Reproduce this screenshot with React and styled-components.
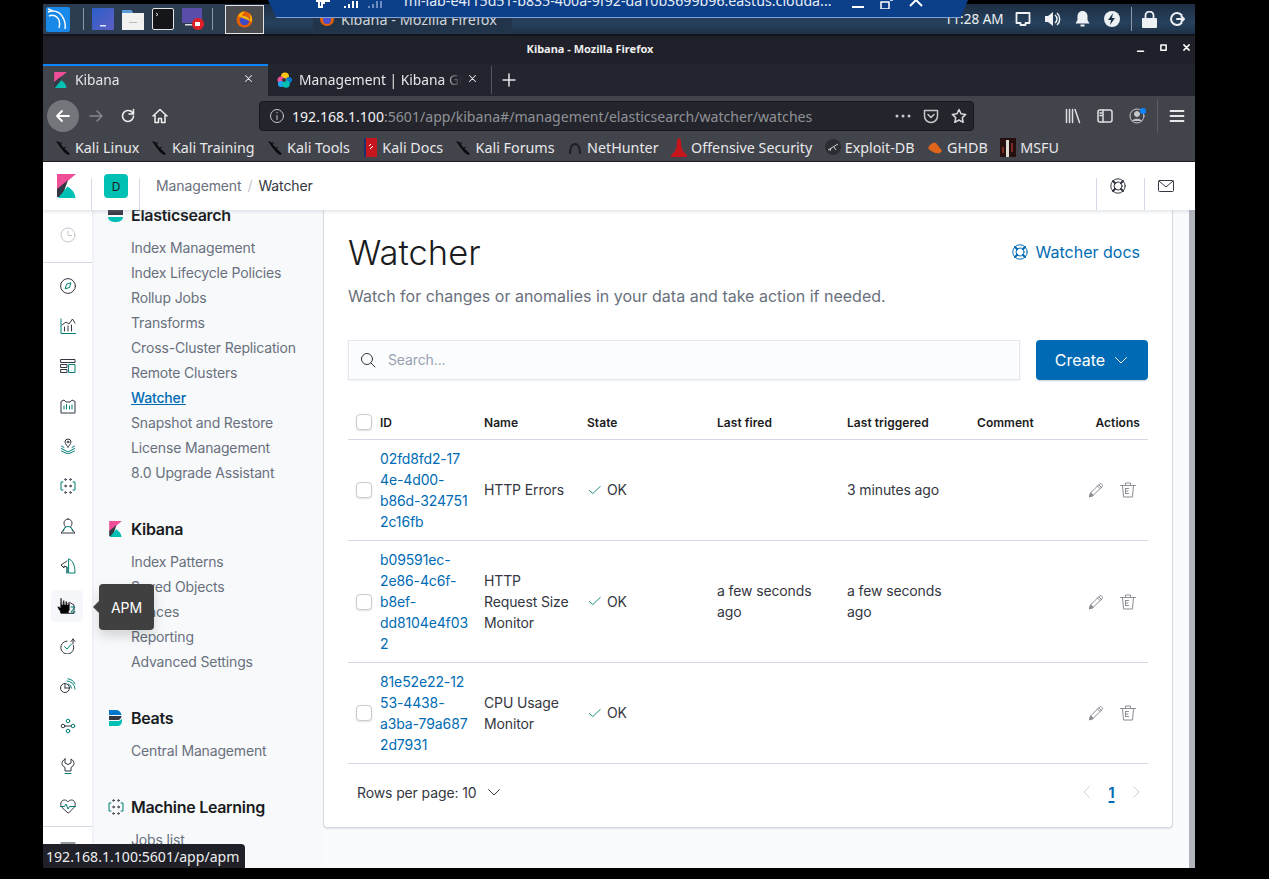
import React from 'react';
import styled, { createGlobalStyle } from 'styled-components';

const Global = createGlobalStyle`
  html, body { margin: 0; padding: 0; background: #000; height: 879px; overflow: hidden; }
  * { box-sizing: border-box; }
  #root { height: 879px; }
`;
const FF = `"Noto Sans", "Open Sans", sans-serif`;
const UI = `Inter, "Liberation Sans", sans-serif`;
const TEAL = '#017d73';
const DARK = '#343741';

const Stage = styled.div`position: relative; width: 1269px; height: 879px; background: #000; padding: 4px 74px 11px 43px; overflow: hidden;`;
const Screen = styled.div`display: flex; flex-direction: column; height: 864px; font-family: ${FF};`;

const Taskbar = styled.div`height: 30px; flex: none; background: linear-gradient(#1c2d42, #27415c 60%, #1e3248); display: flex; align-items: center; color: #e8ebee;`;
const Launcher = styled.div`display: flex; align-items: center; height: 100%; width: 182px; padding-left: 3px; gap: 8px; background: #2c3d52;`;
const Sep = styled.span`width: 1px; height: ${p => p.$h || 22}px; background: ${p => p.$c || '#8b98a8'}; flex: none; margin: ${p => p.$m || '0'};`;
const ActiveApp = styled.div`width: 39px; height: 29px; border: 1px solid #e4e4e4; background: #4a4c50; display: flex; align-items: center; justify-content: center; flex: none;`;
const TaskTitle = styled.div`margin-left: 49px; width: 199px; height: 100%; padding-left: 6px; background: #223449; display: flex; align-items: center; gap: 6px; font-size: 14.4px; color: #cfd6dd; white-space: nowrap; overflow: hidden;`;
const Clock = styled.div`margin-left: auto; font-size: 13.5px; color: #eef1f4; white-space: nowrap; margin-right: 11px; font-family: ${FF};`;
const Tray = styled.div`display: flex; align-items: center; gap: 14px; padding-right: 10px;`;
const TrayNudge = styled.span`display: block; margin-left: -1.5px;`;

const TitleBar = styled.div`height: 30px; flex: none; background: #1f2029; border-top: 2px solid #14151b; display: flex; align-items: center; position: relative; color: #eee; font-size: 11px; font-weight: 700; justify-content: center; padding: 0 58px 4px 0;`;
const WinCtl = styled.div`position: absolute; right: 1px; top: 7px; display: flex; gap: 11px; align-items: center;`;

const TabBar = styled.div`height: 32px; flex: none; background: #23252e; display: flex; align-items: stretch; color: #e6e6e8; font-size: 13.8px;`;
const TabBase = styled.div`display: flex; align-items: center; white-space: nowrap;`;
const ActiveTab = styled(TabBase)`width: 225px; background: #42444c; border-top: 2px solid #0a84ff; padding: 0 12px 3px 11px; gap: 8px;`;
const IdleTab = styled(TabBase)`width: 224px; padding: 0 11px 1px 9px; gap: 6px; border-right: 1px solid #55575f; margin: 2px 0;`;
const TabText = styled.span`flex: 1; overflow: hidden; white-space: nowrap; -webkit-mask-image: linear-gradient(90deg, #000 88%, transparent); mask-image: linear-gradient(90deg, #000 88%, transparent);`;
const PlusBtn = styled.div`width: 34px; display: flex; align-items: center; justify-content: center;`;

const NavBar = styled.div`height: 38px; flex: none; background: #42444c; display: flex; align-items: center; padding: 2px 0 0 4px; color: #e6e6e8;`;
const RoundBack = styled.div`width: 32px; height: 32px; border-radius: 50%; background: #74767b; display: flex; align-items: center; justify-content: center; flex: none;`;
const NavBtn = styled.div`width: 32px; display: flex; justify-content: center; flex: none; margin-left: ${p => p.$ml || 0}px;`;
const UrlField = styled.div`margin-left: 83px; width: 715px; height: 30px; flex: none; background: #24252c; border: 1px solid #17181d; border-radius: 4px; display: flex; align-items: center; padding: 0 6px 0 9px; font-size: 14.1px;`;
const UrlHost = styled.span`color: #f2f2f3; margin-left: 7px;`;
const UrlRest = styled.span`color: #8f9196; flex: 1;`;
const UrlActions = styled.div`display: flex; align-items: center; gap: 12px;`;
const Tools = styled.div`margin-left: 91px; display: flex; align-items: center; gap: 16px; position: relative;`;
const BlueDot = styled.span`position: absolute; width: 6px; height: 6px; border-radius: 50%; background: #0a84ff; left: 75px; top: 9px;`;

const BookmarkBar = styled.div`height: 28px; flex: none; background: #42444c; border-bottom: 1px solid #1c1d22; display: flex; align-items: center; padding: 0 0 1px 12px; gap: 12.5px; color: #e8e8ea; font-size: 14.3px;`;
const Bm = styled.div`display: flex; align-items: center; gap: 4px; white-space: nowrap;`;
const BmIcon = styled.span`width: 16px; display: flex; justify-content: center; flex: none;`;

const Page = styled.div`position: relative; flex: 1; min-height: 0; background: #fafbfd; display: flex; flex-direction: column; overflow: hidden; font-family: ${UI}; color: ${DARK}; letter-spacing: -.12px;`;
const Header = styled.header`height: 48px; flex: none; background: #fff; display: flex; align-items: stretch; padding-right: 3px; box-shadow: 0 2px 3px rgba(152,162,179,.25); position: relative; z-index: 2;`;
const HeadLogo = styled.div`width: 49px; flex: none; border-right: 1px solid #d3dae6; margin-top: 16px; padding-left: 14px;`;
const LogoLift = styled.div`margin-top: -4px;`;
const HeadAvatarWrap = styled.div`width: 48px; flex: none; display: flex; justify-content: center; padding-left: 1px; border-right: 1px solid #d3dae6; margin-top: 16px;`;
const Avatar = styled.div`width: 24px; height: 24px; margin-top: -4px; border-radius: 4px; background: #00bfb3; color: #1a1c21; font-size: 12px; display: flex; align-items: center; justify-content: center;`;
const Crumbs = styled.div`display: flex; align-items: center; font-size: 14px; padding: 0 0 2px 16px; color: #69707d; gap: 6px; flex: 1;`;
const CrumbSlash = styled.span`color: #c2c6ce;`;
const CrumbNow = styled.span`color: #343741;`;
const HeadBtn = styled.div`width: 48px; flex: none; display: flex; justify-content: center; padding-right: 6px; border-left: 1px solid #d3dae6; margin-top: 16px; color: ${DARK};`;

const Body = styled.div`flex: 1; min-height: 0; display: flex; overflow: hidden;`;
const Rail = styled.nav`width: 49px; flex: none; background: #fff; display: flex; flex-direction: column; overflow: hidden; box-shadow: 1px 0 2px rgba(152,162,179,.15); z-index: 1;`;
const RailTop = styled.div`height: 53px; flex: none; border-bottom: 1px solid #d3dae6; display: flex; align-items: center; justify-content: center; padding-bottom: 2px;`;
const RailList = styled.div`padding-top: 3px; flex: none; border-bottom: 1px solid #d3dae6;`;
const RailItem = styled.div`height: 40px; display: flex; align-items: center; justify-content: center; position: relative;`;
const RailIconWrap = styled.span`position: relative; display: block;`;
const HoverBox = styled.div`position: absolute; left: 8px; top: 4px; width: 32px; height: 32px; border-radius: 4px; background: #f5f7fa;`;
const HandWrap = styled.span`position: absolute; left: 14px; top: 11px; display: block;`;
const RailFoot = styled.div`height: 40px; flex: none; display: flex; align-items: center; justify-content: center;`;

const SideNav = styled.aside`width: 231px; flex: none; background: #f7f9fb; overflow: hidden; padding: 0 0 0 16px;`;
const SideInner = styled.div`margin-top: -7px;`;
const Section = styled.section`margin-bottom: 32.5px;`;
const SecHead = styled.div`height: 24px; display: flex; align-items: center; gap: 8px; font-size: 16px; font-weight: 600; color: #1a1c21; letter-spacing: -.3px;`;
const SecIcon = styled.span`width: 15px; display: flex; justify-content: center; flex: none;`;
const SecLinks = styled.div`margin: 7.5px 0 0 23px; letter-spacing: -.16px;`;
const SecLink = styled.div`height: 25px; line-height: 25px; font-size: 14px; white-space: nowrap; color: ${p => p.$on ? '#006bb4' : '#69707d'}; text-decoration: ${p => p.$on ? 'underline' : 'none'}; font-weight: ${p => p.$on ? 500 : 400};`;

const Main = styled.main`flex: 1; min-width: 0; display: flex; align-items: flex-start;`;
const Panel = styled.div`width: 850px; background: #fff; border: 1px solid #d3dae6; border-top: 0; border-radius: 0 0 4px 4px; box-shadow: 0 2px 2px -1px rgba(152,162,179,.3); padding: 23px 24px 0 24px; height: 618px;`;
const TitleRow = styled.div`display: flex; justify-content: space-between; align-items: center; height: 40px;`;
const H1 = styled.h1`margin: 0; font-weight: 300; font-size: 34.5px; line-height: 40px; color: #1a1c21; letter-spacing: 0;`;
const DocLink = styled.div`display: flex; align-items: center; gap: 8px; font-size: 16px; color: #006bb4; padding: 0 8px 2px 0; letter-spacing: 0;`;
const Sub = styled.p`margin: 13px 0 0; font-size: 16px; line-height: 20px; color: #69707d; letter-spacing: 0;`;
const Toolbar = styled.div`display: flex; gap: 16px; margin-top: 34px;`;
const Search = styled.div`flex: 1; height: 40px; background: #fbfcfd; border: 1px solid #e4e7ef; box-shadow: 0 1px 2px rgba(152,162,179,.15); display: flex; align-items: center; gap: 12px; padding: 0 0 1px 11px; font-size: 14px; color: #98a2b3;`;
const Create = styled.div`width: 112px; height: 40px; background: #006bb4; border-radius: 4px; color: #fff; font-size: 16px; display: flex; align-items: center; justify-content: center; gap: 8px; letter-spacing: 0; box-shadow: 0 2px 2px -1px rgba(54,97,126,.3);`;

const COLS = '32px 104px 103px 130px 130px 130px 100px 71px';
const THead = styled.div`display: grid; grid-template-columns: ${COLS}; margin-top: 32px; height: 28px; align-items: center; border-bottom: 1px solid #d3dae6; padding-bottom: 7px; font-size: 12px; font-weight: 600; color: #1a1c21; letter-spacing: .05px;`;
const TRow = styled.div`display: grid; grid-template-columns: ${COLS}; align-items: center; border-bottom: 1px solid #d3dae6; padding: 8px 0; font-size: 14px; line-height: 21px; color: ${DARK};`;
const Check = styled.span`display: block; width: 16px; height: 16px; margin-left: 8px; background: #fff; border: 1px solid #c9cbcd; border-radius: 4px; box-shadow: 0 1px 2px rgba(0,0,0,.12);`;
const Id = styled.div`color: #006bb4; white-space: nowrap;`;
const Cell = styled.div`padding-right: 10px; margin-top: -1px;`;
const OkCell = styled.div`display: flex; align-items: center; gap: 5px; padding-left: 1px; margin-top: -1px;`;
const RightHead = styled.div`text-align: right; padding-right: 8px;`;
const Actions = styled.div`display: flex; justify-content: flex-end; gap: 16px; padding-right: 12px; color: #8a8d94;`;
const Pager = styled.div`display: flex; align-items: center; justify-content: space-between; height: 56px; padding: 0 5px 0 9px; font-size: 14px; color: ${DARK};`;
const Rows = styled.div`display: flex; align-items: center; gap: 10px;`;
const Pages = styled.div`display: flex; align-items: center; gap: 14.5px; color: #c2c6ce;`;
const PageNo = styled.span`color: #006bb4; font-weight: 700; text-decoration: underline; text-decoration-thickness: 2px; text-underline-offset: 3px;`;

const Thumb = styled.div`position: absolute; right: 0; top: 25px; bottom: 0; width: 6px; background: #b1b4bb; z-index: 1;`;
const Tip = styled.div`position: absolute; left: 56px; top: 422px; width: 55px; height: 46px; background: #404040; color: #fff; border-radius: 4px; display: flex; align-items: center; justify-content: center; font-size: 14px; z-index: 3; box-shadow: 0 6px 12px rgba(0,0,0,.15);
  &::before { content: ''; position: absolute; left: -6px; top: 17px; border: 6px solid transparent; border-left: 0; border-right-color: #404040; }`;
const Status = styled.div`position: absolute; left: 0; bottom: 0; width: 202px; height: 24px; background: #1f2028; color: #eee; border-radius: 0 4px 0 0; font-family: ${FF}; font-size: 14.1px; letter-spacing: 0; display: flex; align-items: center; padding-left: 3px; z-index: 4; white-space: nowrap;`;

const RdpBar = styled.div`position: absolute; left: 268px; top: 0; width: 700px; height: 18px; background: #0c3f8a; clip-path: polygon(0 0, 100% 0, 98.9% 100%, 1.2% 100%); z-index: 5; color: #fff; font-family: ${FF}; font-size: 14.2px; white-space: nowrap; line-height: 14px;
  box-shadow: inset 0 -1px 0 #7fa3d6;`;
const RdpName = styled.span`position: absolute; left: 136px; top: -6px; color: #e8eef7;`;
const RdpBtns = styled.div`position: absolute; inset: 0;`;
const RdpIcon = styled.svg`position: absolute; left: ${p => p.$x}px; top: ${p => p.$y || 0}px; display: block;`;

const I = ({ s = 16, vb = 16, c = 'currentColor', children, w = 1 }) => (
  <svg width={s} height={s} viewBox={`0 0 ${vb} ${vb}`} fill="none" stroke={c} strokeWidth={w} strokeLinecap="round" strokeLinejoin="round" style={{ display: 'block', flex: 'none' }}>{children}</svg>
);

const KibanaLogo = ({ w = 19, h = 24 }) => (
  <svg width={w} height={h} viewBox="0 0 19 24" style={{ display: 'block', flex: 'none' }}>
    <path d="M0 0H19L0 16Z" fill="#f04e98" />
    <path d="M0 24V16L11 7L5 24Z" fill="#343741" transform="translate(0 -1)" />
    <path d="M1 24L10.5 12.5C15 15 18 19 18.5 24Z" fill="#00bfb3" />
  </svg>
);
const Lifebuoy = ({ c = DARK }) => (
  <I c={c}><circle cx="8" cy="8" r="7.2" /><circle cx="8" cy="8" r="4" /><path d="M3 3l2.200 2.200M13 3l-2.200 2.200M3 13l2.200-2.200M13 13l-2.200-2.200" strokeWidth="2" /></I>
);
const Chevron = ({ c = 'currentColor', s = 16 }) => <I c={c} s={s}><path d="M2.500 5.500L8 11l5.500-5.500" /></I>;
const Pencil = () => (
  <I><path d="M1.500 14.500l1-3.500L11.500 2a1.400 1.400 0 012 0l.6.6a1.400 1.400 0 010 2L5 13.500z" /><path d="M3 11l2.200 2.200M9.500 4l2.500 2.500M11 3l2.500 2.500" /><path d="M1.500 14.500l1-3 2 2z" fill="currentColor" /></I>
);
const Trash = () => (
  <I><path d="M0.500 3.500h15M5.500 3.500V1h5v2.500M2.500 3.500l1 11.500h9l1-11.500" /><path d="M5.500 6.500h3M5.500 9h2.500M5.500 11.500h3M5.500 6.500v5" /></I>
);
const Tick = () => <I c={TEAL} s={14}><path d="M1.500 8.500L5.500 12L14 4" /></I>;

const Dragon = () => (
  <svg width="17" height="17" viewBox="0 0 17 17" style={{ display: 'block', flex: 'none' }}>
    <path d="M1 2l3 1 4 5 3 3 4 4-2 1-4-3-4-5z" fill="#0b0b0d" /><path d="M5 3l2 2M9 9l2-1" stroke="#0b0b0d" />
  </svg>
);
function Hand() {
  return (
    <HandWrap>
      <svg width="15" height="17" viewBox="0 0 14 16" style={{ display: 'block' }}>
        <path d="M3 1h1.500v6h1V3h1.500v4h1V4h1.500v3h1V5H12v8H2L0 9h2l1 1z" fill="#000" stroke="#fff" strokeWidth=".4" />
        <path d="M3 12h8v3H3z" fill="#000" />
      </svg>
    </HandWrap>
  );
}

const railIcons = [
  <I key="a"><circle cx="8" cy="8" r="7.400" stroke={DARK} /><path d="M10.800 5.200L9.500 9.500 5.200 10.800 6.500 6.500z" stroke={TEAL} /></I>,
  <I key="b" c={DARK}><path d="M1 1v14.500h14.500" stroke={TEAL} /><path d="M2 7l4-3 3 2 3.500-5L15 5" /><path d="M4.500 13V9M8 13V8M11.500 13V7" /></I>,
  <I key="c" c={DARK}><rect x="1" y="1.500" width="14" height="3" /><rect x="1" y="6.500" width="6" height="3" /><rect x="1" y="11.500" width="6" height="3" /><rect x="9" y="6.500" width="6" height="8" stroke={TEAL} /></I>,
  <I key="d" c={DARK}><path d="M1 3.500l3-1.500 2 2 4 0 2-2 3 1.500v11.500H1z" strokeDasharray="2 .6" /><path d="M4 11V8M6.500 11V6.500M9.500 11V8M12 11V7" stroke={TEAL} /></I>,
  <I key="e" c={DARK}><path d="M8 9s3-3 3-5a3 3 0 00-6 0c0 2 3 5 3 5z" /><circle cx="8" cy="4" r=".9" /><path d="M1.500 10.500L8 14l6.500-3.500M1.500 8L4 9.500M14.500 8L12 9.500M1.500 13L8 16l6.500-3" stroke={TEAL} /></I>,
  <I key="f" c={DARK}><circle cx="5.500" cy="1.500" r=".8" /><circle cx="10.500" cy="1.500" r=".8" /><circle cx="5.500" cy="8" r=".8" /><circle cx="10.500" cy="8" r=".8" /><circle cx="5.500" cy="14.500" r=".8" /><circle cx="10.500" cy="14.500" r=".8" /><path d="M3 4H1v8h2M13 4h2v8h-2" stroke={TEAL} /></I>,
  <I key="g" c={DARK}><path d="M8 1a4 4 0 014 4c0 2-1 3-1.500 4l4.500 6H1l4.500-6C5 8 4 7 4 5a4 4 0 014-4z" /><path d="M3.500 13a4.500 4.500 0 019 0" stroke={TEAL} /></I>,
  <I key="h" c={DARK}><path d="M7 3L1 7l3 3v-2l3 1v6" /><path d="M7 15V9M9 1c3 1 6 5 6 14H9z" stroke={TEAL} /></I>,
  <I key="i" c={DARK}><path d="M1 15V4l4 3V4l4 3V4l5 3v8z" /><path d="M11 9h4l-4 5h4" stroke={TEAL} /></I>,
  <I key="j" c={DARK}><path d="M13.500 7.500A6.500 6.500 0 117 3" /><path d="M4.500 8.500L7 11l4.500-5" stroke={TEAL} /><path d="M11 3.500L13 1l2 2.500M13 1v5" /></I>,
  <I key="k" c={DARK}><circle cx="5" cy="10" r="4.500" /><path d="M5 10V5.500M5 10h4.500" /><path d="M7 3a8 8 0 018 8M8 .8a9 9 0 017 5M8.500 6a5 5 0 013 4" stroke={TEAL} /></I>,
  <I key="l" c={DARK}><circle cx="3" cy="8" r="1.800" /><circle cx="8" cy="3" r="1.800" stroke={TEAL} /><circle cx="8" cy="13" r="1.800" stroke={TEAL} /><circle cx="13" cy="8" r="1.800" stroke={TEAL} /><path d="M5 8h6" /></I>,
  <I key="m" c={DARK}><path d="M5 1v4l3 1.500L11 5V1c2 1 3 3 3 4.500 0 2-1.500 3-3 4V13H5V9.500c-1.500-1-3-2-3-4C2 4 3 2 5 1z" /><path d="M5 15.500h6" stroke={TEAL} /></I>,
  <I key="n" c={DARK}><path d="M8 15L2 9.500C-.5 7 .8 2 4.500 2 6 2 7.500 3 8 4c.5-1 2-2 3.500-2 3.700 0 5 5 2.500 7.500z" /><path d="M0 8.500h4.500L6 6l2 5 1.500-2.500H16" stroke={TEAL} /></I>,
];

const sections = [
  { name: 'Elasticsearch', icon: (
      <svg width="15" height="16" viewBox="0 0 15 16" style={{ display: 'block' }}><path d="M0 8h15v-5H0z" fill="#343741" /><path d="M0 10h15c0 3-3 5-7.500 5S0 13 0 10z" fill="#00bfb3" /></svg>
    ), links: ['Index Management', 'Index Lifecycle Policies', 'Rollup Jobs', 'Transforms', 'Cross-Cluster Replication', 'Remote Clusters', 'Watcher', 'Snapshot and Restore', 'License Management', '8.0 Upgrade Assistant'] },
  { name: 'Kibana', icon: <KibanaLogo w={13} h={16} />, links: ['Index Patterns', 'Saved Objects', 'Spaces', 'Reporting', 'Advanced Settings'] },
  { name: 'Beats', icon: (
      <svg width="13" height="16" viewBox="0 0 13 16" style={{ display: 'block' }}><path d="M0 0h7c3 0 5 2 5.500 5H0z" fill="#0077cc" /><path d="M0 6h12.500c0 2-1.500 3.500-3 4H0z" fill="#343741" /><path d="M0 11h10l3-2v2c0 3-2 5-5 5H0z" fill="#00bfb3" /></svg>
    ), links: ['Central Management'] },
  { name: 'Machine Learning', icon: railIcons[5], links: ['Jobs list'] },
];

const rows = [
  { id: ['02fd8fd2-17', '4e-4d00-', 'b86d-324751', '2c16fb'], name: ['HTTP Errors'], trig: '3 minutes ago' },
  { id: ['b09591ec-', '2e86-4c6f-', 'b8ef-', 'dd8104e4f03', '2'], name: ['HTTP', 'Request Size', 'Monitor'], fired: ['a few seconds', 'ago'], trigL: ['a few seconds', 'ago'] },
  { id: ['81e52e22-12', '53-4438-', 'a3ba-79a687', '2d7931'], name: ['CPU Usage', 'Monitor'] },
];
const Lines = ({ l }) => (l || []).map((t, i) => <React.Fragment key={i}>{i > 0 && <br />}{t}</React.Fragment>);

const bookmarks = [
  ['Kali Linux', <Dragon key="1" />], ['Kali Training', <Dragon key="2" />], ['Kali Tools', <Dragon key="3" />],
  ['Kali Docs', <svg key="4" width="13" height="19" viewBox="0 0 13 19"><rect x="0" y="0" width="13" height="19" fill="#c4161c" /><rect x="0" y="0" width="2" height="19" fill="#1f2f6b" /><path d="M5 8l2-2M6 11l3-3" stroke="#fff" /></svg>],
  ['Kali Forums', <Dragon key="5" />],
  ['NetHunter', <svg key="6" width="16" height="16" viewBox="0 0 16 16"><path d="M3 15c0-6 2-10 5-10s5 4 5 10" fill="none" stroke="#1e1f24" strokeWidth="2" /></svg>],
  ['Offensive Security', <svg key="7" width="16" height="19" viewBox="0 0 16 19"><path d="M8 0c2 0 2 4 2.500 9 .5 3 3 6 5.500 8v2H0v-2c2.500-2 5-5 5.500-8C6 4 6 0 8 0z" fill="#c4161c" /></svg>],
  ['Exploit-DB', <svg key="8" width="16" height="16" viewBox="0 0 16 16"><circle cx="8" cy="8" r="8" fill="#2b2d33" /><path d="M3 11l5-3 5-3M6 9l-1 3M9 8l2 3" stroke="#ccc" /></svg>],
  ['GHDB', <svg key="9" width="16" height="14" viewBox="0 0 16 14"><path d="M1 8c2-4 5-6 8-5l6 8-2 2C9 14 4 12 1 8z" fill="#e0651a" /></svg>],
  ['MSFU', <svg key="10" width="16" height="19" viewBox="0 0 16 19"><rect width="16" height="19" fill="#25100f" /><rect x="6" y="2" width="3" height="17" fill="#dfdbd5" /><rect x="2" y="9" width="2" height="6" fill="#7c2a22" /><rect x="11" y="5" width="2" height="9" fill="#7c2a22" /></svg>],
];

export default function App() {
  return (
    <Stage>
      <Global />
      <Screen>
        <Taskbar>
          <Launcher>
            <svg width="24" height="25" viewBox="0 0 24 25" style={{ display: 'block', flex: 'none' }}>
              <rect width="24" height="25" rx="2" fill="#1889e8" />
              <path d="M2 5c5-2 11-1 14 4 2 3 4 7 3 13M7 4L2 2M3 9c4-2 8 0 10 4M13 13c1 3 1 5 0 8" fill="none" stroke="#fff" strokeWidth="1.400" />
            </svg>
            <Sep $m="0 0 0 5px" />
            <svg width="22" height="22" viewBox="0 0 22 22" style={{ display: 'block', flex: 'none' }}><defs><linearGradient id="dsk" x1="0" y1="0" x2="1" y2="1"><stop offset="0" stopColor="#2c5ec9" /><stop offset="1" stopColor="#5d5fc4" /></linearGradient></defs><rect width="22" height="22" rx="1" fill="url(#dsk)" /><rect x="8" y="17" width="6" height="1.500" fill="#dfe6f7" /></svg>
            <svg width="22" height="22" viewBox="0 0 22 22" style={{ display: 'block', flex: 'none' }}><path d="M0 2h9l2 3h11v17H0z" fill="#f1f1ef" /><path d="M0 2h9l2 3H0z" fill="#5b9bd9" /><rect x="7" y="14" width="8" height="1" fill="#b8b8b6" /></svg>
            <svg width="22" height="22" viewBox="0 0 22 22" style={{ display: 'block', flex: 'none' }}><rect x=".5" y=".5" width="21" height="21" rx="1.500" fill="#15161a" stroke="#e6e6e6" /><path d="M4 5l2 1.500L4 8" stroke="#ddd" fill="none" /></svg>
            <svg width="22" height="24" viewBox="0 0 22 24" style={{ display: 'block', flex: 'none' }}><rect y="1" width="20" height="15" fill="#3e57c6" /><rect y="1" width="20" height="15" fill="#8d3b74" opacity=".35" /><rect x="3" y="17" width="12" height="1.500" fill="#ddd" /><circle cx="16" cy="17" r="6" fill="#df1e26" /><rect x="13" y="15" width="5" height="4" fill="#fff" /></svg>
            <Sep />
          </Launcher>
          <ActiveApp>
            <svg width="17" height="17" viewBox="0 0 16 16"><circle cx="8" cy="8" r="7.500" fill="#e66000" /><circle cx="8" cy="9" r="4.500" fill="#3f4bc4" /><path d="M2 5c1-3 4-5 7-4.500C6 2 6 4 6 5c2-1 6 0 7 4 1-3 0-6-1-7 3 2 3.500 6 3 8" fill="#ffb000" /></svg>
          </ActiveApp>
          <TaskTitle>
            <svg width="16" height="16" viewBox="0 0 16 16" style={{ display: 'block', flex: 'none' }}><circle cx="8" cy="8" r="7" fill="#e66000" /><circle cx="8" cy="9" r="4" fill="#4c4fd0" /></svg>
            Kibana - Mozilla Firefox
          </TaskTitle>
          <Clock>11:28 AM</Clock>
          <Tray>
            <I c="#eef1f4" w="1.800"><path d="M1.500 2h13v10h-4v2h-5v-2h-4z" /></I>
            <svg width="16" height="16" viewBox="0 0 16 16" style={{ display: 'block' }}><path d="M0 5h3l5-4v14l-5-4H0z" fill="#eef1f4" /><path d="M10 4a5 5 0 010 8M12 2a8 8 0 010 12" stroke="#eef1f4" strokeWidth="1.500" fill="none" /></svg>
            <svg width="15" height="16" viewBox="0 0 15 16" style={{ display: 'block' }}><path d="M7.500 0a5 5 0 015 5v4l2 3.500H.5l2-3.500V5a5 5 0 015-5z" fill="#eef1f4" /><rect x="5.500" y="13.500" width="4" height="2" fill="#eef1f4" /></svg>
            <svg width="16" height="16" viewBox="0 0 16 16" style={{ display: 'block' }}><circle cx="8" cy="8" r="8" fill="#eef1f4" /><path d="M9 2L4 9h3l-1 5 5-7H8z" fill="#1f3349" /></svg>
            <Sep $m="0 -4px 0 -3px" $h={24} />
            <svg width="15" height="17" viewBox="0 0 15 17" style={{ display: 'block' }}><rect y="7" width="15" height="10" rx="1" fill="#eef1f4" /><path d="M3.500 7V4.500a4 4 0 018 0V7" stroke="#eef1f4" strokeWidth="1.800" fill="none" /></svg>
            <TrayNudge><I c="#eef1f4" w="2"><path d="M12.500 4A6 6 0 1012.500 12M8 8h7M12.500 5.500L15 8l-2.500 2.500" /></I></TrayNudge>
          </Tray>
        </Taskbar>

        <TitleBar>
          Kibana - Mozilla Firefox
          <WinCtl>
            <I s={12} c="#fff" w="2"><path d="M2 11h8" /></I>
            <I s={12} c="#fff" w="2"><rect x="2.500" y="2.500" width="7" height="7" /></I>
            <I s={12} c="#fff" w="2"><path d="M2.500 2.500l7 7M9.500 2.500l-7 7" /></I>
          </WinCtl>
        </TitleBar>

        <TabBar>
          <ActiveTab>
            <KibanaLogo w={13} h={16} />
            <TabText>Kibana</TabText>
            <I s={12} c="#e6e6e8" w="1.400"><path d="M2 2l8 8M10 2l-8 8" /></I>
          </ActiveTab>
          <IdleTab>
            <svg width="16" height="16" viewBox="0 0 16 16" style={{ display: 'block', flex: 'none' }}><circle cx="8" cy="4.500" r="4" fill="#fec514" /><circle cx="4" cy="8" r="3.500" fill="#f04e98" /><circle cx="12" cy="8" r="3" fill="#0077cc" /><circle cx="4" cy="12" r="3" fill="#1ba9f5" /><circle cx="9" cy="12" r="3.800" fill="#00bfb3" /><circle cx="7" cy="8" r="2" fill="#343741" /></svg>
            <TabText>Management | Kibana Guide</TabText>
            <I s={12} c="#e6e6e8" w="1.400"><path d="M2 2l8 8M10 2l-8 8" /></I>
          </IdleTab>
          <PlusBtn><I s={16} c="#e6e6e8" w="1.500"><path d="M8 2v12M2 8h12" /></I></PlusBtn>
        </TabBar>

        <NavBar>
          <RoundBack><I c="#fff" w="1.800"><path d="M14 8H2M7 3L2 8l5 5" /></I></RoundBack>
          <NavBtn $ml={1}><I c="#85878c" w="1.500"><path d="M2 8h12M9 3l5 5-5 5" /></I></NavBtn>
          <NavBtn><I c="#eee" w="1.600"><path d="M13.500 8A5.500 5.500 0 118.500 2.500c2 0 3.500 1 4.500 3" /><path d="M13.500 1.500v4.500H9" /></I></NavBtn>
          <NavBtn><I c="#eee" w="1.500"><path d="M1 8l7-6.500L15 8M3 7v7.500h3.500v-4h3v4H13V7" /></I></NavBtn>
          <UrlField>
            <I c="#c8c8ca"><circle cx="8" cy="8" r="6.500" /><path d="M8 7.500v4M8 4.500v.5" /></I>
            <UrlHost>192.168.1.100</UrlHost>
            <UrlRest>:5601/app/kibana#/management/elasticsearch/watcher/watches</UrlRest>
            <UrlActions>
              <svg width="16" height="4" viewBox="0 0 16 4" style={{ display: 'block' }}><circle cx="2" cy="2" r="1.500" fill="#c8c8ca" /><circle cx="8" cy="2" r="1.500" fill="#c8c8ca" /><circle cx="14" cy="2" r="1.500" fill="#c8c8ca" /></svg>
              <I c="#c8c8ca" w="1.500"><path d="M1.500 2.500h13v5.500a6.500 6.500 0 01-13 0z" /><path d="M5 6.500l3 3 3-3" /></I>
              <I c="#d8d8da" w="1.500"><path d="M8 1.500l2 4.300 4.700.6-3.400 3.200.9 4.700L8 12l-4.200 2.300.9-4.700L1.300 6.400 6 5.800z" /></I>
            </UrlActions>
          </UrlField>
          <Tools>
            <I c="#e0e0e2" w="1.500"><path d="M1.500 1.500v13M4.500 1.500v13M7.500 1.500v13M10 1.500l4.500 13" /></I>
            <I c="#e0e0e2" w="1.500"><rect x="1" y="2" width="14" height="12" rx="2" /><path d="M6 2v12M3 5h1.500M3 7.500h1.500" /></I>
            <I c="#c8c8ca"><circle cx="8" cy="8" r="7" /><circle cx="8" cy="6" r="2.500" fill="#c8c8ca" /><path d="M3.500 13c1-2.500 8-2.500 9 0" fill="#c8c8ca" /></I>
            <BlueDot />
            <Sep $m="0 -5px 0 -4px" $h={34} $c="#5c5e66" />
            <I c="#e8e8ea" w="1.800"><path d="M1.500 3h13M1.500 8h13M1.500 13h13" /></I>
          </Tools>
        </NavBar>

        <BookmarkBar>
          {bookmarks.map(([t, ic]) => <Bm key={t}><BmIcon>{ic}</BmIcon>{t}</Bm>)}
        </BookmarkBar>

        <Page>
          <Header>
            <HeadLogo><LogoLift><KibanaLogo /></LogoLift></HeadLogo>
            <HeadAvatarWrap><Avatar>D</Avatar></HeadAvatarWrap>
            <Crumbs>Management<CrumbSlash>/</CrumbSlash><CrumbNow>Watcher</CrumbNow></Crumbs>
            <HeadBtn><Lifebuoy /></HeadBtn>
            <HeadBtn><I c={DARK}><rect x=".5" y="2.500" width="15" height="11" rx="1" /><path d="M1 3l7 6 7-6" /></I></HeadBtn>
          </Header>
          <Thumb />
          <Body>
            <Rail>
              <RailTop><I c="#c2c6ce"><circle cx="8" cy="8" r="7" /><path d="M8 4v4.500h3.500" /></I></RailTop>
              <RailList>
                {railIcons.map((ic, i) => (
                  <RailItem key={i}>{i === 8 && <HoverBox />}<RailIconWrap>{ic}</RailIconWrap>{i === 8 && <Hand />}</RailItem>
                ))}
              </RailList>
              <RailFoot><I c={DARK}><path d="M1 4h14M1 8h14M1 12h14" /></I></RailFoot>
            </Rail>
            <SideNav>
              <SideInner>
                {sections.map(s => (
                  <Section key={s.name}>
                    <SecHead><SecIcon>{s.icon}</SecIcon>{s.name}</SecHead>
                    <SecLinks>{s.links.map(l => <SecLink key={l} $on={l === 'Watcher'}>{l}</SecLink>)}</SecLinks>
                  </Section>
                ))}
              </SideInner>
            </SideNav>
            <Main>
              <Panel>
                <TitleRow>
                  <H1>Watcher</H1>
                  <DocLink><Lifebuoy c="#006bb4" />Watcher docs</DocLink>
                </TitleRow>
                <Sub>Watch for changes or anomalies in your data and take action if needed.</Sub>
                <Toolbar>
                  <Search><I c={DARK}><circle cx="7" cy="7" r="5.500" /><path d="M11 11l4 4" /></I>Search...</Search>
                  <Create>Create <Chevron c="#fff" /></Create>
                </Toolbar>
                <THead>
                  <Check />
                  <div>ID</div><div>Name</div><div>State</div><div>Last fired</div><div>Last triggered</div><div>Comment</div>
                  <RightHead>Actions</RightHead>
                </THead>
                {rows.map(r => (
                  <TRow key={r.id[0]}>
                    <Check />
                    <Id><Lines l={r.id} /></Id>
                    <Cell><Lines l={r.name} /></Cell>
                    <OkCell><Tick />OK</OkCell>
                    <Cell><Lines l={r.fired} /></Cell>
                    <Cell>{r.trig}<Lines l={r.trigL} /></Cell>
                    <Cell />
                    <Actions><Pencil /><Trash /></Actions>
                  </TRow>
                ))}
                <Pager>
                  <Rows>Rows per page: 10 <Chevron c={DARK} /></Rows>
                  <Pages>
                    <I s={14}><path d="M10.500 2L4.500 8l6 6" /></I>
                    <PageNo>1</PageNo>
                    <I s={14}><path d="M5.500 2l6 6-6 6" /></I>
                  </Pages>
                </Pager>
              </Panel>
            </Main>
          </Body>
          <Tip>APM</Tip>
          <Status>192.168.1.100:5601/app/apm</Status>
        </Page>
      </Screen>

      <RdpBar>
        <RdpName>ml-lab-e4f15d51-b835-400a-9f92-da10b3699b96.eastus.clouda...</RdpName>
        <RdpBtns>
          <RdpIcon $x="47" width="16" height="8" viewBox="0 0 16 8"><path d="M1 1h14M4 1v6h3V1M9 1v3" stroke="#fff" strokeWidth="2" fill="none" /></RdpIcon>
          <RdpIcon $x="76" width="16" height="8" viewBox="0 0 16 8"><path d="M1 8V6M5 8V4M9 8V1M13 8V1" stroke="#fff" strokeWidth="2" fill="none" /></RdpIcon>
          <RdpIcon $x="100" width="14" height="8" viewBox="0 0 14 8"><path d="M1 8V6M5 8V4M9 8V1M13 8V1" stroke="#6d8cc0" strokeWidth="2" fill="none" /></RdpIcon>
          <RdpIcon $x="584" width="12" height="8" viewBox="0 0 12 8"><path d="M0 7h12" stroke="#fff" strokeWidth="2" /></RdpIcon>
          <RdpIcon $x="612" width="13" height="9" viewBox="0 0 13 9"><path d="M1 2h8v7H1zM10 0h3" stroke="#fff" fill="none" strokeWidth="1.500" /></RdpIcon>
          <RdpIcon $x="641" width="14" height="8" viewBox="0 0 14 8"><path d="M1 6l6-6 6 6" stroke="#fff" strokeWidth="2" fill="none" /></RdpIcon>
        </RdpBtns>
      </RdpBar>
    </Stage>
  );
}
